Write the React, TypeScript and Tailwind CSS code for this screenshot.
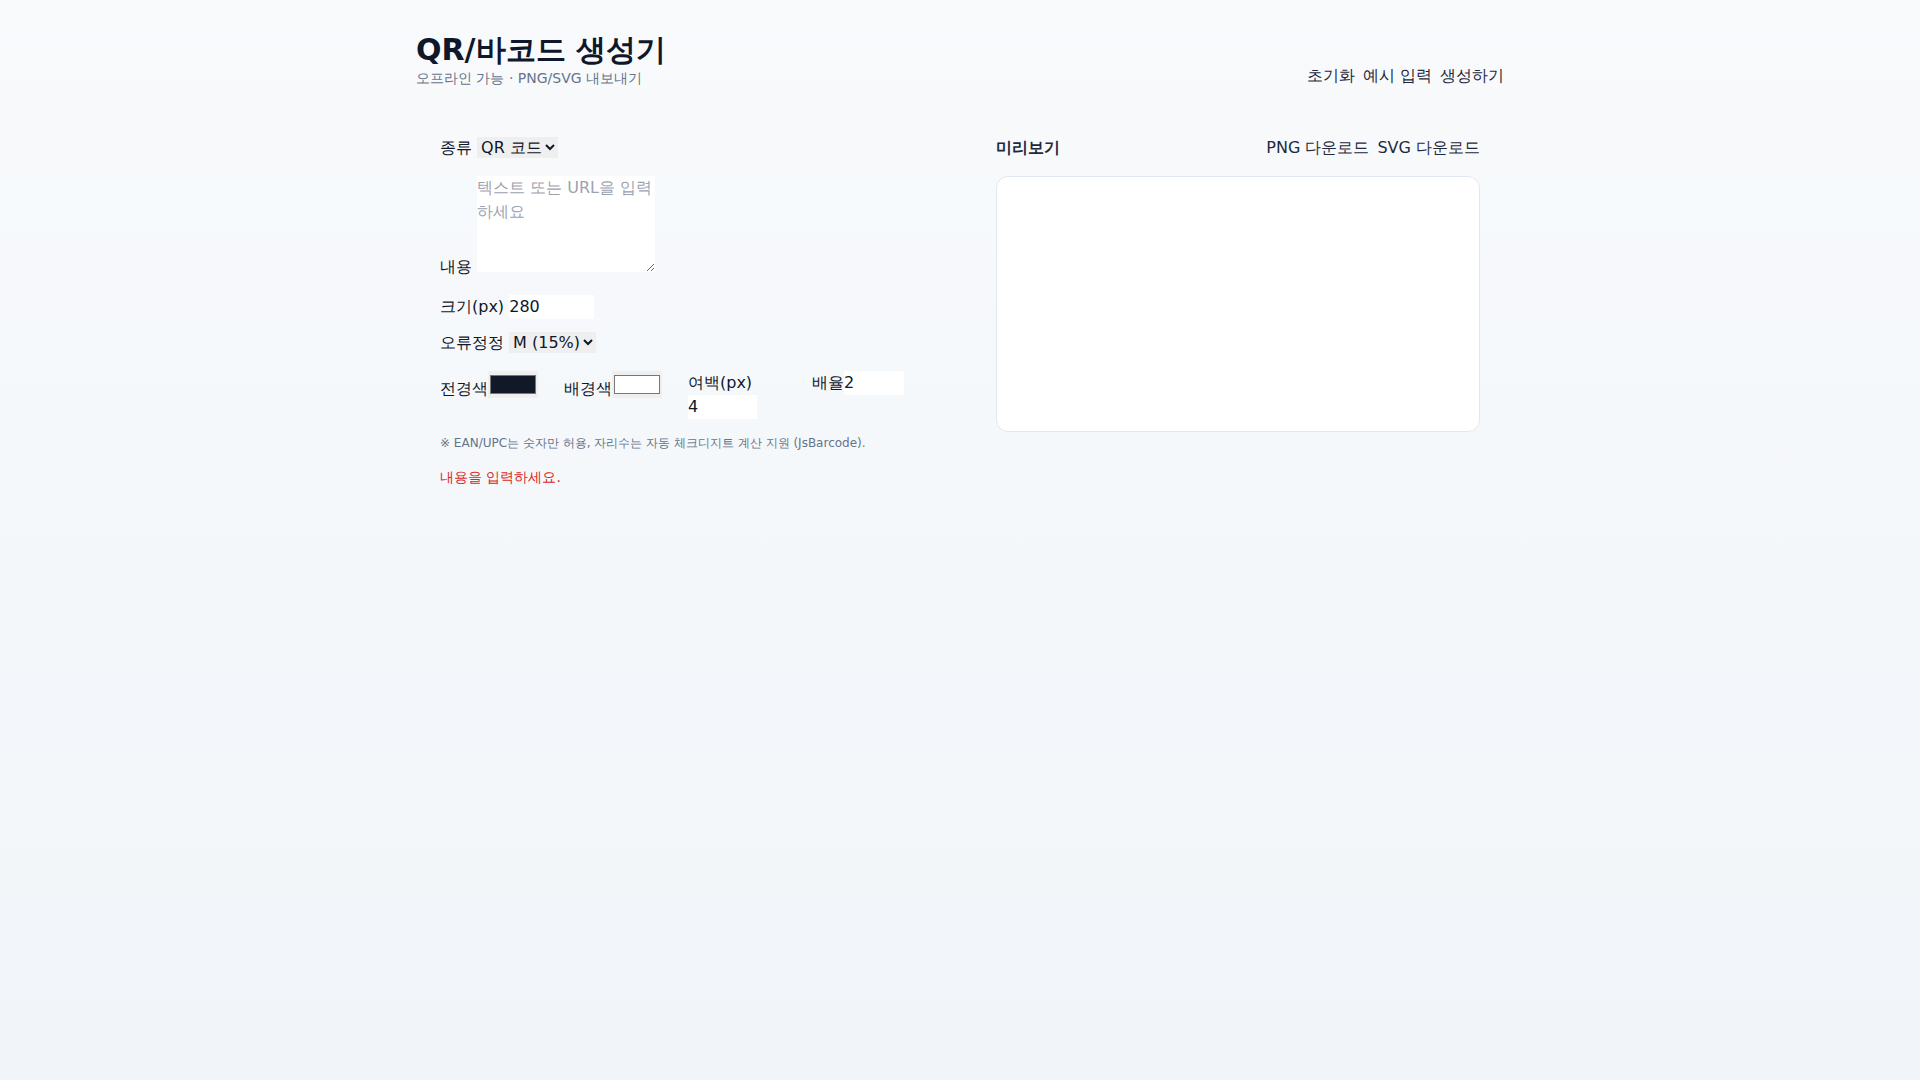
import React, { useState } from 'react';

// --- Small form pieces ---

const ColorField: React.FC<{ label: string; value: string; onChange: (v: string) => void }> = ({ label, value, onChange }) => (
  <label className="block leading-6">
    {label}
    <input
      type="color"
      value={value}
      onChange={(e) => onChange(e.target.value)}
      className="w-[50px] h-[27px] bg-[#efefef] p-0 align-baseline cursor-pointer"
    />
  </label>
);

// --- Main page ---

export default function App() {
  const [kind, setKind] = useState('qr');
  const [text, setText] = useState('');
  const [size, setSize] = useState('280');
  const [level, setLevel] = useState('M');
  const [fg, setFg] = useState('#111827');
  const [bg, setBg] = useState('#ffffff');
  const [margin, setMargin] = useState('4');
  const [scale, setScale] = useState('2');

  const reset = () => {
    setKind('qr');
    setText('');
    setSize('280');
    setLevel('M');
    setFg('#111827');
    setBg('#ffffff');
    setMargin('4');
    setScale('2');
  };

  return (
    <div className="min-h-screen bg-gradient-to-b from-[#f8fafc] to-[#f1f5f9] text-[#0f172a] font-['DejaVu_Sans',sans-serif]">
      <div className="max-w-6xl mx-auto px-8 py-8">
        <header className="flex items-end justify-between">
          <div>
            <h1 className="text-3xl font-bold">QR/바코드 생성기</h1>
            <p className="text-sm text-[#64748b]">오프라인 가능 · PNG/SVG 내보내기</p>
          </div>
          <div className="flex gap-2 text-[#1e293b]">
            <button onClick={reset}>초기화</button>
            <button onClick={() => setText('https://example.com')}>예시 입력</button>
            <button>생성하기</button>
          </div>
        </header>

        <main className="mt-6 grid grid-cols-2 gap-6">
          <section className="p-6">
            <label className="block leading-6">
              종류{' '}
              <select
                value={kind}
                onChange={(e) => setKind(e.target.value)}
                className="w-[81px] h-[21px] bg-[#efefef] leading-[21px] align-baseline"
              >
                <option value="qr">QR 코드</option>
                <option value="code128">C128</option>
                <option value="ean13">EAN</option>
                <option value="upc">UPC</option>
              </select>
            </label>

            <label className="block leading-6 mt-4">
              내용{' '}
              <textarea
                value={text}
                onChange={(e) => setText(e.target.value)}
                placeholder="텍스트 또는 URL을 입력하세요"
                className="w-[178px] h-[96px] bg-white align-baseline leading-6 placeholder:text-[#9ca3af]"
              />
            </label>

            <label className="block leading-6 mt-4">
              크기(px){' '}
              <input
                type="number"
                value={size}
                onChange={(e) => setSize(e.target.value)}
                className="w-[85px] h-6 bg-white align-baseline [appearance:textfield]"
              />
            </label>

            <label className="block leading-6 mt-3">
              오류정정{' '}
              <select
                value={level}
                onChange={(e) => setLevel(e.target.value)}
                className="w-[87px] h-[21px] bg-[#efefef] leading-[21px] align-baseline"
              >
                <option value="L">L (7%)</option>
                <option value="M">M (15%)</option>
                <option value="Q">Q (25%)</option>
                <option value="H">H (30%)</option>
              </select>
            </label>

            <div className="mt-4 grid grid-cols-4 gap-3">
              <ColorField label="전경색" value={fg} onChange={setFg} />
              <ColorField label="배경색" value={bg} onChange={setBg} />
              <label className="block leading-6">
                여백(px)
                <input
                  type="number"
                  value={margin}
                  onChange={(e) => setMargin(e.target.value)}
                  className="w-[69px] h-6 bg-white align-baseline [appearance:textfield]"
                />
              </label>
              <label className="block leading-6">
                배율
                <input
                  type="number"
                  value={scale}
                  onChange={(e) => setScale(e.target.value)}
                  className="w-[60px] h-6 bg-white align-baseline [appearance:textfield]"
                />
              </label>
            </div>

            <p className="mt-4 text-xs text-[#64748b]">
              ※ EAN/UPC는 숫자만 허용, 자리수는 자동 체크디지트 계산 지원 (JsBarcode).
            </p>
            <p className="mt-4 text-sm text-[#dc2626]">{text ? '' : '내용을 입력하세요.'}</p>
          </section>

          <section className="p-6">
            <div className="flex items-center justify-between leading-6">
              <h2 className="font-semibold text-[#1e293b]">미리보기</h2>
              <div className="flex gap-2 text-[#1e293b]">
                <button>PNG 다운로드</button>
                <button>SVG 다운로드</button>
              </div>
            </div>
            <div className="mt-4 h-64 rounded-xl border border-[#e2e8f0] bg-white" />
          </section>
        </main>
      </div>
    </div>
  );
}
